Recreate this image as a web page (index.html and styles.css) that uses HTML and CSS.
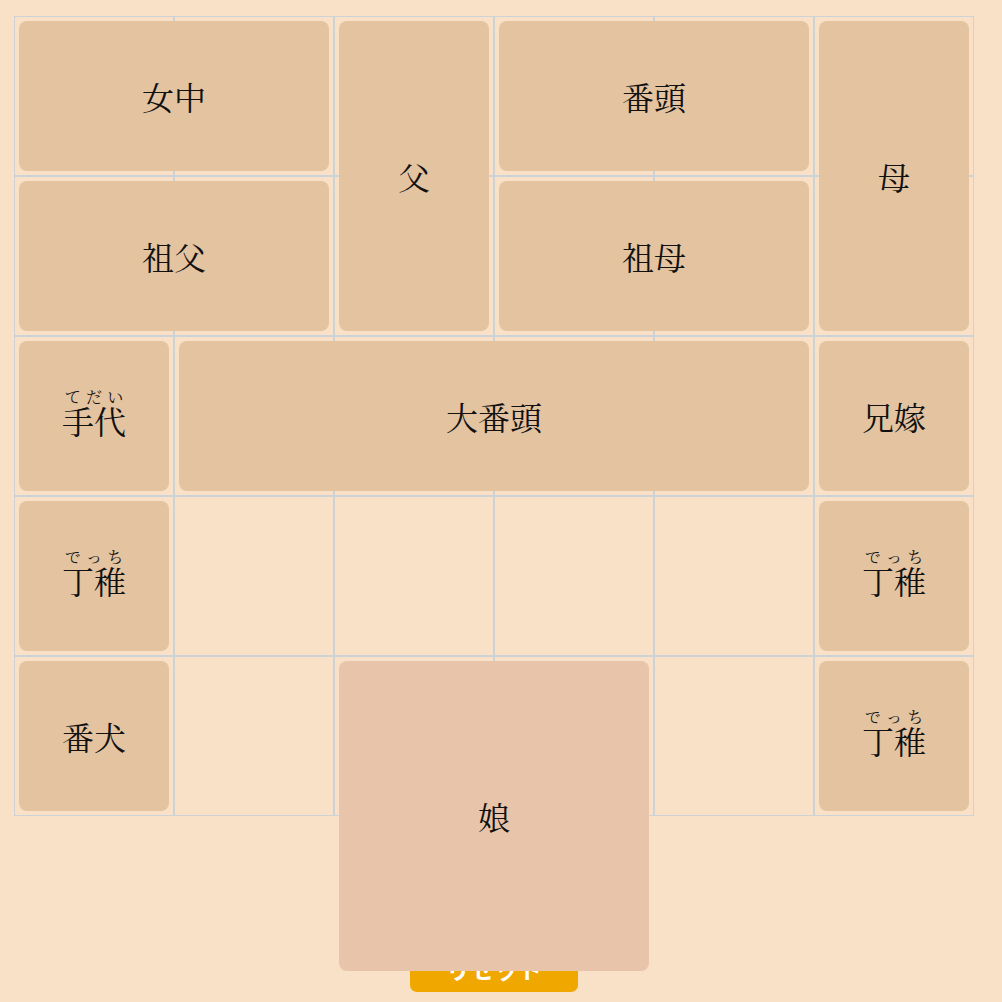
FILE: index.html
```html
<!DOCTYPE html>
<html lang="ja">
<head>
<meta charset="utf-8">
<title>箱入り娘</title>
<link rel="stylesheet" href="styles.css">
</head>
<body>
<main class="game">
  <div class="board">
    <div class="cells">
      <div class="cell"></div><div class="cell"></div><div class="cell"></div><div class="cell"></div><div class="cell"></div><div class="cell"></div>
      <div class="cell"></div><div class="cell"></div><div class="cell"></div><div class="cell"></div><div class="cell"></div><div class="cell"></div>
      <div class="cell"></div><div class="cell"></div><div class="cell"></div><div class="cell"></div><div class="cell"></div><div class="cell"></div>
      <div class="cell"></div><div class="cell"></div><div class="cell"></div><div class="cell"></div><div class="cell"></div><div class="cell"></div>
      <div class="cell"></div><div class="cell"></div><div class="cell"></div><div class="cell"></div><div class="cell"></div><div class="cell"></div>
    </div>
    <div class="pieces">
      <div class="piece p-jochu">女中</div>
      <div class="piece p-chichi">父</div>
      <div class="piece p-banto">番頭</div>
      <div class="piece p-haha">母</div>
      <div class="piece p-sofu">祖父</div>
      <div class="piece p-sobo">祖母</div>
      <div class="piece piece-ruby p-tedai"><ruby>手代<rt>てだい</rt></ruby></div>
      <div class="piece p-obanto">大番頭</div>
      <div class="piece p-aniyome">兄嫁</div>
      <div class="piece piece-ruby p-detchi1"><ruby>丁稚<rt>でっち</rt></ruby></div>
      <div class="piece piece-ruby p-detchi2"><ruby>丁稚<rt>でっち</rt></ruby></div>
      <div class="piece p-banken">番犬</div>
      <div class="piece piece-musume p-musume">娘</div>
      <div class="piece piece-ruby p-detchi3"><ruby>丁稚<rt>でっち</rt></ruby></div>
    </div>
  </div>
  <button class="reset">リセット</button>
</main>
</body>
</html>
```

FILE: styles.css
```css
html, body {
  margin: 0;
  padding: 0;
  background: #f9e1c8;
}
body {
  font-family: "Noto Serif CJK JP", "Noto Serif JP", "IPAMincho", "IPAexMincho", "Liberation Serif", serif;
  overflow: hidden;
}
.game {
  padding: 16px 0 0 14px;
  width: 960px;
  display: flex;
  flex-direction: column;
  align-items: center;
}
.board {
  display: grid;
  width: 960px;
  height: 800px;
  grid-template-columns: 960px;
  grid-template-rows: 800px;
}
.cells, .pieces {
  grid-area: 1 / 1;
  display: grid;
  grid-template-columns: repeat(6, 160px);
  grid-template-rows: repeat(5, 160px);
  grid-auto-rows: 160px;
}
.cell {
  box-sizing: border-box;
  border: 1px solid #ccd2d5;
}
.pieces {
  position: relative;
  z-index: 1;
}
.piece {
  margin: 5px;
  border-radius: 8px;
  background: #e3c3a0;
  display: flex;
  align-items: center;
  justify-content: center;
  font-size: 32px;
  color: #111;
  box-sizing: border-box;
}
.piece-ruby { padding-bottom: 8px; }
.piece-musume { background: #e8c5aa; }
ruby { line-height: 1; }
rt { font-size: 16px; line-height: 1.5; }
.p-jochu   { grid-column: 1 / 3; grid-row: 1; }
.p-chichi  { grid-column: 3; grid-row: 1 / 3; }
.p-banto   { grid-column: 4 / 6; grid-row: 1; }
.p-haha    { grid-column: 6; grid-row: 1 / 3; }
.p-sofu    { grid-column: 1 / 3; grid-row: 2; }
.p-sobo    { grid-column: 4 / 6; grid-row: 2; }
.p-tedai   { grid-column: 1; grid-row: 3; }
.p-obanto  { grid-column: 2 / 6; grid-row: 3; }
.p-aniyome { grid-column: 6; grid-row: 3; }
.p-detchi1 { grid-column: 1; grid-row: 4; }
.p-detchi2 { grid-column: 6; grid-row: 4; }
.p-banken  { grid-column: 1; grid-row: 5; }
.p-musume  { grid-column: 3 / 5; grid-row: 5 / 7; }
.p-detchi3 { grid-column: 6; grid-row: 5; }
.reset {
  margin-top: 128px;
  width: 168px;
  height: 48px;
  border: none;
  border-radius: 7px;
  background: #f0a800;
  color: #fff;
  font-family: "Noto Sans CJK JP", sans-serif;
  font-weight: bold;
  font-size: 24px;
  padding: 0;
}
```
